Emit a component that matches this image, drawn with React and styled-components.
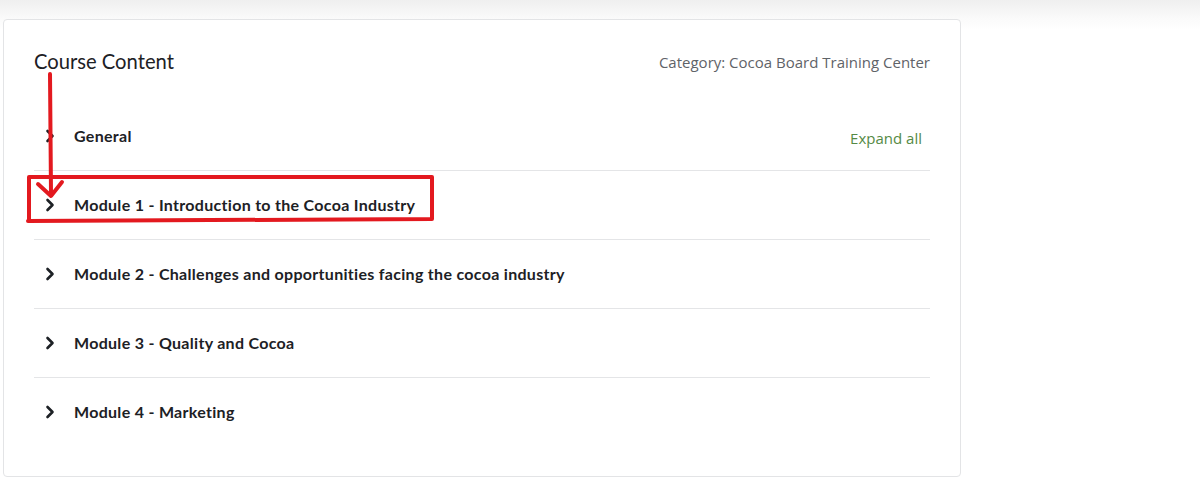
import React from 'react';
import styled, { createGlobalStyle } from 'styled-components';

const Global = createGlobalStyle`
  body {
    margin: 0;
    background: #fff;
    font-family: "Lato", "Noto Sans", sans-serif;
  }
`;

const Page = styled.div`
  position: relative;
  width: 1200px;
  height: 482px;
  padding: 19px 0 0 3px;
  box-sizing: border-box;
  background: linear-gradient(to bottom, #efefef 0, #fafafa 18px, #fff 30px);
`;

const Card = styled.div`
  width: 958px;
  height: 458px;
  box-sizing: border-box;
  background: #fff;
  border: 1px solid #e3e4e6;
  border-radius: 4px;
  padding: 0 30px;
`;

const Header = styled.div`
  display: flex;
  justify-content: space-between;
  align-items: center;
  height: 81px;
  padding-bottom: 1px;
`;

const Title = styled.h2`
  margin: 0;
  font-size: 20.2px;
  font-weight: 400;
  color: #1d2125;
`;

const Category = styled.span`
  font-family: "Open Sans", sans-serif;
  font-size: 15px;
  color: #5f6368;
  margin-top: 3px;
`;

const Row = styled.div`
  display: flex;
  align-items: center;
  height: 68px;
  border-top: ${p => (p.first ? 'none' : '1px solid #e4e5e7')};
  padding-left: 11px;
`;

const Chevron = styled.svg`
  width: 10px;
  height: 14px;
  flex-shrink: 0;
  margin-right: 19px;
`;

const Name = styled.span`
  font-size: 16px;
  font-weight: 700;
  color: #1d2125;
  letter-spacing: 0.3px;
  margin-top: -2px;
`;

const Expand = styled.a`
  margin-left: auto;
  margin-right: 8px;
  margin-top: 4px;
  font-family: "Open Sans", sans-serif;
  font-size: 15px;
  color: #558a45;
  text-decoration: none;
`;

const Overlay = styled.svg`
  position: absolute;
  top: 0;
  left: 0;
  pointer-events: none;
`;

const sections = [
  'General',
  'Module 1 - Introduction to the Cocoa Industry',
  'Module 2 - Challenges and opportunities facing the cocoa industry',
  'Module 3 - Quality and Cocoa',
  'Module 4 - Marketing',
];

function Arrow() {
  return (
    <Chevron viewBox="0 0 10 14">
      <path d="M2.5 2 L7.5 7 L2.5 12" fill="none" stroke="#1d2125" strokeWidth="2.6" strokeLinecap="round" strokeLinejoin="round" />
    </Chevron>
  );
}

export default function App() {
  return (
    <Page>
      <Global />
      <Card>
        <Header>
          <Title>Course Content</Title>
          <Category>Category: Cocoa Board Training Center</Category>
        </Header>
        {sections.map((s, i) => (
          <Row key={s} first={i === 0}>
            <Arrow />
            <Name>{s}</Name>
            {i === 0 && <Expand href="#">Expand all</Expand>}
          </Row>
        ))}
      </Card>
      <Overlay width="1200" height="482" viewBox="0 0 1200 482">
        <g fill="none" stroke="#e3191f" strokeWidth="4" strokeLinecap="round" strokeLinejoin="round">
          <path d="M50 74 L51 194" />
          <path d="M38 184 L51 196 L62 182" />
          <path d="M29 221 L29 177 L432 177 L432 219 L28 221" />
        </g>
      </Overlay>
    </Page>
  );
}
